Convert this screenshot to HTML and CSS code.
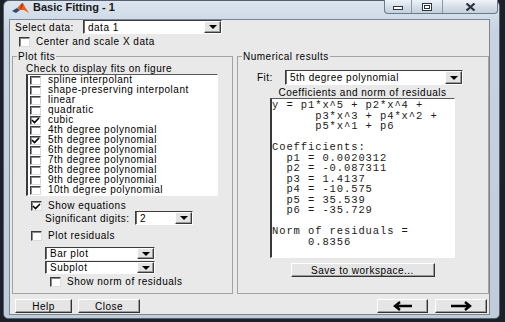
FILE: index.html
```html
<!DOCTYPE html>
<html lang='en'>
<head>
    <meta charset='UTF-8'>
    <meta name='viewport' content='width=device-width, initial-scale=1.0'>
    <title>Basic Fitting - 1</title>
    <link rel="stylesheet" href="styles.css">
</head>
<body>
    <div class="window">
        <div class="titlebar">
            <svg class="app-icon" width="17" height="11" viewBox="0 0 17 11">
                <polygon points="0,8 5,5 8,7 4,10" fill="#2a4a80"/>
                <polygon points="5,5 9,1 11,0 13,4 17,10 12,7 8,7" fill="#e8611a"/>
                <polygon points="9,1 11,0 10,5 8,7" fill="#b8320c"/>
            </svg>
            <span class="title">Basic Fitting - 1</span>
            <div class="caption-buttons">
                <span class="cap-btn cap-min">
                    <svg width="10" height="6" viewBox="0 0 10 6"><rect x="0.5" y="2.5" width="9" height="3" fill="#fff" stroke="#2c3440"/></svg>
                </span>
                <span class="cap-btn cap-max">
                    <svg width="10" height="8" viewBox="0 0 10 8"><rect x="0.5" y="0.5" width="9" height="7" fill="#fff" stroke="#2c3440"/><rect x="2.5" y="2.5" width="5" height="3" fill="none" stroke="#2c3440"/></svg>
                </span>
                <span class="cap-btn cap-close">
                    <svg width="11" height="8" viewBox="0 0 11 8"><path d="M1.5 0.5 L9.5 7.5 M9.5 0.5 L1.5 7.5" stroke="#2c3440" stroke-width="2.2"/></svg>
                </span>
            </div>
        </div>

        <div class="client">
            <div class="select-row">
                <span class="select-label">Select data:</span>
                <div class="dropdown data-dd"><span class="value">data 1</span><span class="arrow"><i></i></span></div>
            </div>
            <div class="check-row center-row">
                <span class="box"></span><span>Center and scale X data</span>
            </div>

            <div class="panels">
                <fieldset class="group plot-fits">
                    <legend>Plot fits</legend>
                    <div class="fits-caption">Check to display fits on figure</div>
                    <div class="fits-list">
                        <div class="fit-item"><span class="box"></span>spline interpolant</div>
                        <div class="fit-item"><span class="box"></span>shape-preserving interpolant</div>
                        <div class="fit-item"><span class="box"></span>linear</div>
                        <div class="fit-item"><span class="box"></span>quadratic</div>
                        <div class="fit-item"><span class="box checked"><svg width="9" height="7" viewBox="0 0 9 7"><polyline points="1,3 3.5,5.5 8,1" fill="none" stroke="#000" stroke-width="1.6"/></svg></span>cubic</div>
                        <div class="fit-item"><span class="box"></span>4th degree polynomial</div>
                        <div class="fit-item"><span class="box checked"><svg width="9" height="7" viewBox="0 0 9 7"><polyline points="1,3 3.5,5.5 8,1" fill="none" stroke="#000" stroke-width="1.6"/></svg></span>5th degree polynomial</div>
                        <div class="fit-item"><span class="box"></span>6th degree polynomial</div>
                        <div class="fit-item"><span class="box"></span>7th degree polynomial</div>
                        <div class="fit-item"><span class="box"></span>8th degree polynomial</div>
                        <div class="fit-item"><span class="box"></span>9th degree polynomial</div>
                        <div class="fit-item"><span class="box"></span>10th degree polynomial</div>
                    </div>
                    <div class="check-row show-eq">
                        <span class="box checked"><svg width="9" height="7" viewBox="0 0 9 7"><polyline points="1,3 3.5,5.5 8,1" fill="none" stroke="#000" stroke-width="1.6"/></svg></span><span>Show equations</span>
                    </div>
                    <div class="digits-row">
                        <span class="digits-label">Significant digits:</span>
                        <div class="dropdown digits-dd"><span class="value">2</span><span class="arrow"><i></i></span></div>
                    </div>
                    <div class="check-row plot-res">
                        <span class="box"></span><span>Plot residuals</span>
                    </div>
                    <div class="dropdown res-dd bar-dd"><span class="value">Bar plot</span><span class="arrow"><i></i></span></div>
                    <div class="dropdown res-dd sub-dd"><span class="value">Subplot</span><span class="arrow"><i></i></span></div>
                    <div class="check-row show-norm">
                        <span class="box"></span><span>Show norm of residuals</span>
                    </div>
                </fieldset>

                <fieldset class="group numerical">
                    <legend>Numerical results</legend>
                    <div class="fit-row">
                        <span class="fit-label">Fit:</span>
                        <div class="dropdown fit-dd"><span class="value">5th degree polynomial</span><span class="arrow"><i></i></span></div>
                    </div>
                    <div class="results">
                        <div class="results-caption">Coefficients and norm of residuals</div>
<pre class="results-text">y = p1*x^5 + p2*x^4 +
      p3*x^3 + p4*x^2 +
      p5*x^1 + p6

Coefficients:
  p1 = 0.0020312
  p2 = -0.087311
  p3 = 1.4137
  p4 = -10.575
  p5 = 35.539
  p6 = -35.729

Norm of residuals =
     0.8356</pre>
                        <button class="button save-btn">Save to workspace...</button>
                    </div>
                </fieldset>
            </div>

            <div class="bottom-row">
                <button class="button help-btn">Help</button>
                <button class="button close-btn">Close</button>
                <button class="button arrow-btn back-btn">
                    <svg width="20" height="10" viewBox="0 0 20 10"><path d="M19 5 H3 M7 1 L2 5 L7 9" fill="none" stroke="#000" stroke-width="2.4"/></svg>
                </button>
                <button class="button arrow-btn next-btn">
                    <svg width="22" height="10" viewBox="0 0 22 10"><path d="M1 5 H19 M15 1 L20 5 L15 9" fill="none" stroke="#000" stroke-width="2.4"/></svg>
                </button>
            </div>
        </div>
    </div>
</body>
</html>
```

FILE: styles.css
```css
* {
    box-sizing: border-box;
}

body {
    margin: 0;
    height: 322px;
    overflow: hidden;
    background-color: #1d2026;
    font-family: 'Liberation Sans', Arial, sans-serif;
    font-size: 10px;
    letter-spacing: 0.5px;
    color: #000;
}

.window {
    margin-left: 3px;
    width: 497px;
    height: 319px;
    border: 1px solid #56616d;
    border-radius: 6px 6px 5px 5px;
    background: linear-gradient(#dbe5ef, #c6d4e1 30px, #bfcdda);
    display: flex;
    flex-direction: column;
}

/* title bar */

.titlebar {
    height: 18px;
    display: flex;
    align-items: flex-start;
}

.app-icon {
    margin: 2px 0 0 8px;
}

.title {
    margin-left: 4px;
    line-height: 13px;
    font-size: 11px;
    font-weight: bold;
    letter-spacing: 0;
    color: #1a1a1a;
}

.caption-buttons {
    margin: -1px 1px 0 auto;
    height: 14px;
    display: flex;
    border: 1px solid #6c7b8b;
    border-top: none;
    border-radius: 0 0 4px 4px;
    overflow: hidden;
    background: linear-gradient(#eef3f8, #d2dce6 60%, #c3cfdb);
}

.cap-btn {
    display: flex;
    align-items: center;
    justify-content: center;
    border-right: 1px solid #8797a7;
}

.cap-min {
    width: 27px;
}

.cap-max {
    width: 31px;
}

.cap-close {
    width: 54px;
    border-right: none;
}

/* client area */

.client {
    flex: 1;
    margin: 0 9px 3px 5px;
    background-color: #e9e9e9;
    border: 1px solid #7b8692;
    display: flex;
    flex-direction: column;
}

.select-row {
    height: 14px;
    padding-left: 5px;
    display: flex;
    align-items: center;
}

.select-label {
    width: 68px;
}

.check-row {
    height: 10px;
    line-height: 10px;
    display: flex;
    align-items: center;
    gap: 6px;
}

.center-row {
    margin-top: 3px;
    padding-left: 9px;
}

.box {
    width: 11px;
    height: 10px;
    flex-shrink: 0;
    background-color: #fff;
    border: 1px solid;
    border-color: #3c3c3c #dcdcdc #dcdcdc #3c3c3c;
    box-shadow: inset 1px 1px 0 #8a8a8a;
    display: flex;
    align-items: center;
    justify-content: center;
}

/* dropdowns */

.dropdown {
    display: flex;
    background-color: #fff;
    border: 1px solid;
    border-color: #3c3c3c #fff #fff #3c3c3c;
    box-shadow: inset 1px 0 0 #6a6a6a;
}

.dropdown .value {
    flex: 1;
    padding-left: 4px;
    display: flex;
    align-items: center;
    white-space: nowrap;
}

.dropdown .arrow {
    width: 17px;
    background-color: #e4e4e4;
    border: 1px solid;
    border-color: #fff #3a3a3a #3a3a3a #fff;
    box-shadow: inset -1px -1px 0 #9a9a9a;
    display: flex;
    align-items: center;
    justify-content: center;
}

.dropdown .arrow i {
    width: 0;
    height: 0;
    border-left: 4px solid transparent;
    border-right: 4px solid transparent;
    border-top: 4px solid #000;
}

.data-dd {
    width: 139px;
    height: 14px;
}

/* group boxes */

.panels {
    margin-top: 3px;
    padding-left: 2px;
    height: 244px;
    display: flex;
    gap: 4px;
}

.group {
    margin: 0;
    padding: 0 0 0 13px;
    border: 1px solid #a2a2a2;
    display: flex;
    flex-direction: column;
    align-items: flex-start;
}

.group legend {
    padding: 0 1px;
    line-height: 13px;
}

.plot-fits {
    width: 221px;
}

.plot-fits legend {
    margin-left: -9px;
}

.fits-caption {
    margin-top: 1px;
    line-height: 10px;
}

.fits-list {
    width: 192px;
    height: 122px;
    background-color: #fff;
    border-style: solid;
    border-width: 1px 1px 1px 2px;
    border-color: #5a5a5a #fff #fff #3a3a3a;
}

.fit-item {
    height: 10px;
    line-height: 10px;
    padding-left: 2px;
    display: flex;
    align-items: center;
    gap: 7px;
    white-space: nowrap;
}

.fit-item .box {
    height: 9px;
}

.show-eq {
    margin-top: 5px;
    padding-left: 5px;
}

.digits-row {
    height: 14px;
    padding-left: 19px;
    display: flex;
    align-items: center;
}

.digits-label {
    width: 90px;
}

.digits-dd {
    width: 58px;
    height: 14px;
}

.plot-res {
    margin-top: 6px;
    padding-left: 5px;
}

.res-dd {
    margin-left: 19px;
    width: 110px;
    height: 13px;
}

.bar-dd {
    margin-top: 6px;
}

.sub-dd {
    margin-top: 1px;
}

.show-norm {
    margin-top: 3px;
    padding-left: 24px;
}

.numerical {
    width: 252px;
    padding-left: 19px;
}

.numerical legend {
    margin-left: -15px;
}

.fit-row {
    margin-top: 7px;
    height: 15px;
    display: flex;
    align-items: center;
}

.fit-label {
    width: 28px;
}

.fit-dd {
    width: 178px;
    height: 15px;
}

.results {
    margin-left: 13px;
    width: 185px;
    display: flex;
    flex-direction: column;
    align-items: center;
}

.results-caption {
    margin-top: 3px;
    line-height: 10px;
}

.results-text {
    margin: 0;
    width: 185px;
    height: 160px;
    padding: 1px 0 0;
    background-color: #fff;
    border-style: solid;
    border-width: 1px 1px 1px 2px;
    border-color: #5a5a5a #fff #fff #3a3a3a;
    font-family: 'Liberation Mono', 'Courier New', monospace;
    font-size: 10.5px;
    line-height: 10.5px;
    letter-spacing: 0.9px;
    color: #1a1a1a;
    overflow: hidden;
}

/* buttons */

.button {
    margin: 0;
    padding: 0;
    height: 14px;
    font-family: inherit;
    font-size: 10px;
    letter-spacing: 0.5px;
    color: #000;
    background-color: #e5e5e5;
    border: 1px solid;
    border-color: #fff #333 #333 #fff;
    box-shadow: inset -1px -1px 0 #9c9c9c;
    display: flex;
    align-items: center;
    justify-content: center;
}

.save-btn {
    margin-top: 5px;
    width: 144px;
}

.bottom-row {
    margin-top: 5px;
    padding: 0 2px 0 5px;
    display: flex;
    gap: 6px;
}

.help-btn {
    width: 57px;
}

.close-btn {
    width: 62px;
}

.back-btn {
    margin-left: auto;
    width: 51px;
}

.next-btn {
    margin-left: 1px;
    width: 52px;
}
```
